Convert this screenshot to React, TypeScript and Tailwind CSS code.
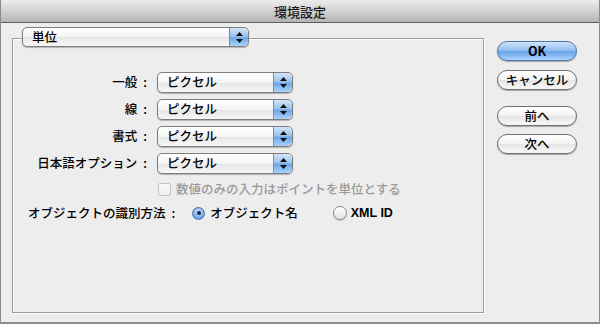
import React from "react";

const FONT = { fontFamily: '"Noto Sans CJK JP", "Noto Sans", "Liberation Sans", sans-serif' };

function Stepper() {
  return (
    <div className="flex h-full w-[19px] flex-col items-center justify-center gap-[3px] rounded-r-[5px] border-l border-[#6b8fbf] bg-[linear-gradient(#d3e4f8,#9cc3f0_45%,#6fa6e8_55%,#a8d2fb)]">
      <svg width="7" height="4" viewBox="0 0 7 4"><path d="M3.5 0L7 4H0z" fill="#111" /></svg>
      <svg width="7" height="4" viewBox="0 0 7 4"><path d="M0 0h7L3.5 4z" fill="#111" /></svg>
    </div>
  );
}

function Popup({ label, className }: { label: string; className: string }) {
  return (
    <div
      className={`flex items-stretch overflow-hidden rounded-[5px] border border-[#7d7d7d] bg-[linear-gradient(#ffffff,#f4f4f4_50%,#e6e6e6_51%,#f7f7f7)] shadow-[0_1px_1px_rgba(0,0,0,0.25)] ${className}`}
    >
      <div className="flex flex-1 items-center pl-[9px] text-[12.5px] font-medium leading-none text-black">{label}</div>
      <Stepper />
    </div>
  );
}

function Row({ label }: { label: string }) {
  return (
    <div className="flex h-[21px] items-center">
      <div className="flex w-[144px] items-center justify-end pr-[10px] text-[12.5px] font-medium leading-none text-black">
        <span>{label}</span>
        <span className="ml-[6px]">:</span>
      </div>
      <Popup label="ピクセル" className="h-[21px] w-[136px]" />
    </div>
  );
}

function Button({ label, primary }: { label: string; primary?: boolean }) {
  return (
    <div
      className={
        primary
          ? "flex h-[20px] w-[80px] items-center justify-center rounded-full border border-[#4f74a8] bg-[linear-gradient(#d2e4fa,#94bff1_45%,#6aa3ea_55%,#a9d5fc)] text-[12.5px] font-bold leading-none text-black shadow-[0_1px_1px_rgba(0,0,0,0.3)]"
          : "flex h-[20px] w-[80px] items-center justify-center rounded-full border border-[#6f6f6f] bg-[linear-gradient(#ffffff,#f3f3f3_50%,#e4e4e4_51%,#f8f8f8)] text-[12.5px] font-medium leading-none text-black shadow-[0_1px_1px_rgba(0,0,0,0.3)]"
      }
    >
      {label}
    </div>
  );
}

export default function App() {
  return (
    <div style={FONT} className="flex h-[324px] w-[600px] flex-col border-x border-b-2 border-[#8c8c8c] bg-[#ededed]">
      <div className="flex h-[23px] shrink-0 items-center justify-center border-b border-[#5e5e5e] bg-[linear-gradient(#ececec,#d2d2d2_50%,#b4b4b4)] text-[13px] font-medium leading-none text-[#1a1a1a]">
        環境設定
      </div>
      <div className="flex flex-1 pl-[11px]">
        <div className="flex w-[472px] flex-col pt-[4px]">
          <Popup label="単位" className="relative z-10 ml-[10px] h-[20px] w-[227px]" />
          <div className="mt-[-9px] flex h-[275px] flex-col border border-[#9b9b9b] pt-[33px] shadow-[inset_1px_1px_0_#ffffff,1px_1px_0_#ffffff]">
            <div className="flex flex-col gap-[6px]">
              <Row label="一般" />
              <Row label="線" />
              <Row label="書式" />
              <Row label="日本語オプション" />
            </div>
            <div className="mt-[7px] flex h-[16px] items-center pl-[145px]">
              <div className="h-[13px] w-[13px] rounded-[2px] border border-[#c4c4c4] bg-[linear-gradient(#fbfbfb,#eeeeee)]" />
              <span className="ml-[5px] text-[12.5px] font-medium leading-none text-[#9a9a9a]">数値のみの入力はポイントを単位とする</span>
            </div>
            <div className="mt-[8px] flex h-[16px] items-center pl-[15px] text-[12.5px] font-medium leading-none text-black">
              <span>オブジェクトの識別方法</span>
              <span className="ml-[6px]">:</span>
              <div className="ml-[17px] flex h-[13px] w-[13px] items-center justify-center rounded-full border border-[#4a6f9f] bg-[radial-gradient(circle_at_50%_35%,#cfe3fa,#6aa3ea_70%,#8fc0f3)]">
                <div className="h-[4px] w-[4px] rounded-full bg-[#1b2a3d]" />
              </div>
              <span className="ml-[5px]">オブジェクト名</span>
              <div className="ml-[35px] h-[14px] w-[14px] rounded-full border border-[#8a8a8a] bg-[linear-gradient(#ffffff,#e2e2e2)] shadow-[0_1px_1px_rgba(0,0,0,0.2)]" />
              <span className="ml-[4px] font-bold" style={{ fontFamily: '"Liberation Sans", Arial, sans-serif', fontSize: "12.5px" }}>
                XML ID
              </span>
            </div>
          </div>
        </div>
        <div className="ml-[13px] flex flex-col pt-[18px]">
          <Button label="OK" primary />
          <div className="mt-[9px]">
            <Button label="キャンセル" />
          </div>
          <div className="mt-[16px]">
            <Button label="前へ" />
          </div>
          <div className="mt-[8px]">
            <Button label="次へ" />
          </div>
        </div>
      </div>
    </div>
  );
}
